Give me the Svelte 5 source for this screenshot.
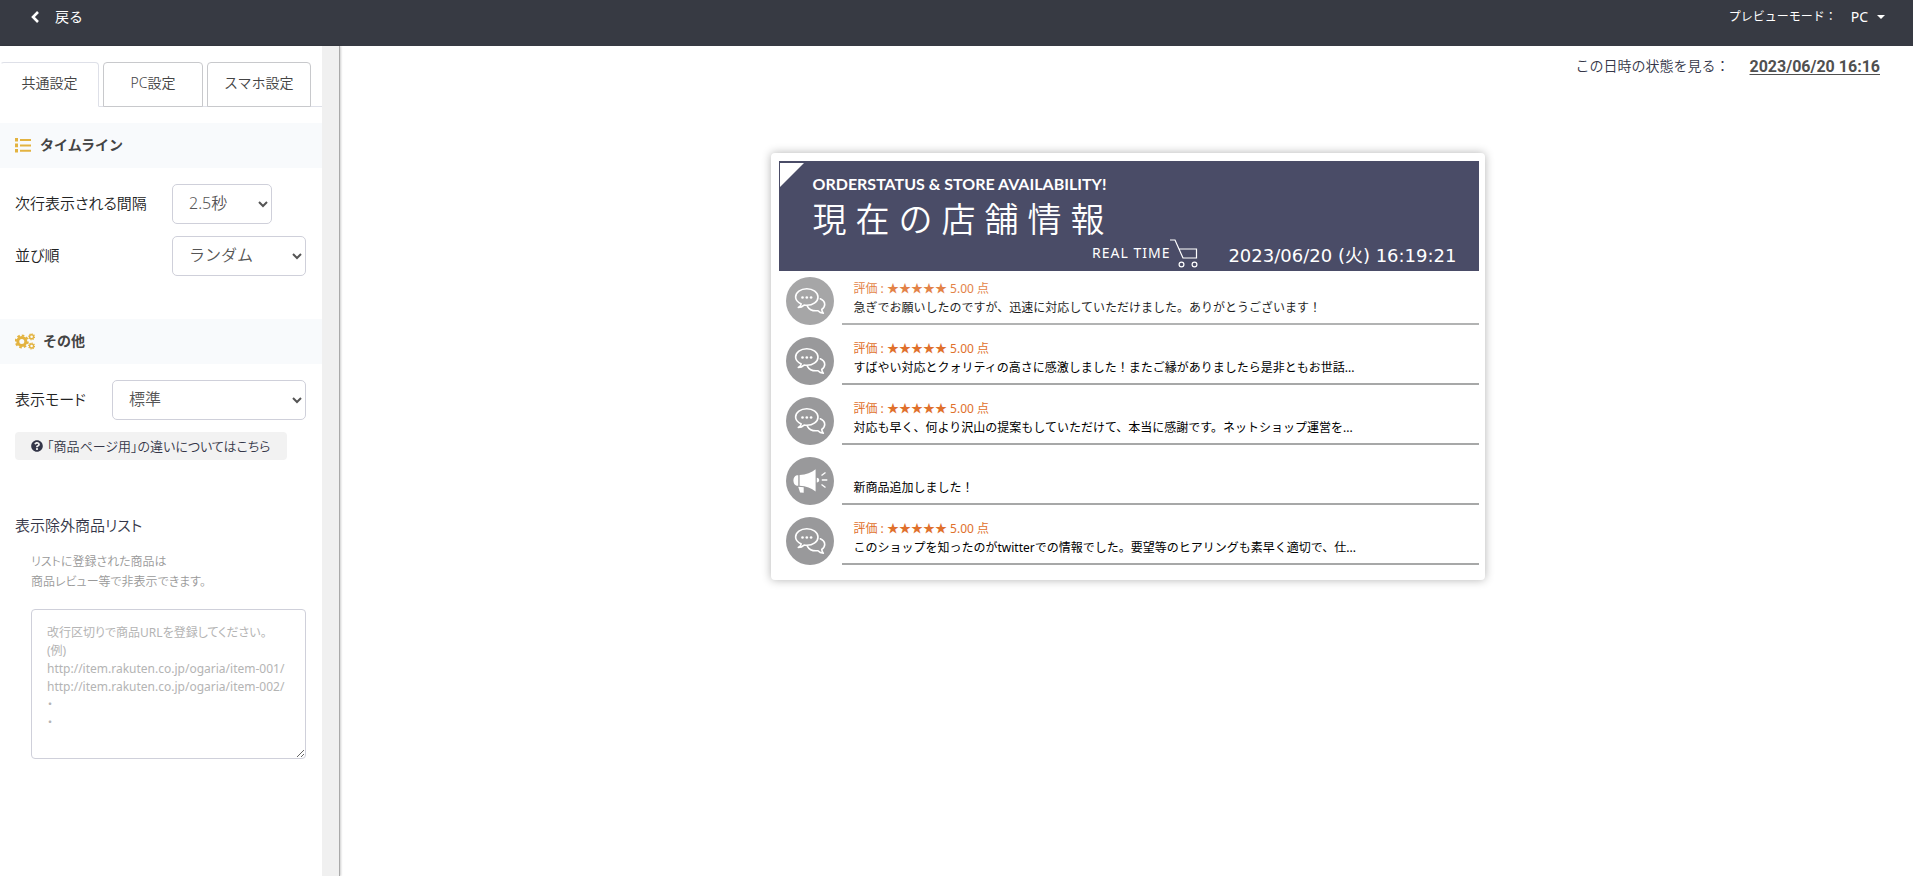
<script>
  let interval = $state('2.5秒');
  let order = $state('ランダム');
  let mode = $state('標準');
  let excluded = $state('');

  const tabs = ['共通設定', 'PC設定', 'スマホ設定'];
  let active = $state(0);

  const placeholder =
    '改行区切りで商品URLを登録してください。\n(例)\nhttp://item.rakuten.co.jp/ogaria/item-001/\nhttp://item.rakuten.co.jp/ogaria/item-002/\n・\n・';

  const rows = [
    { kind: 'review', entering: true, text: '急ぎでお願いしたのですが、迅速に対応していただけました。ありがとうございます！' },
    { kind: 'review', text: 'すばやい対応とクォリティの高さに感激しました！またご縁がありましたら是非ともお世話...' },
    { kind: 'review', text: '対応も早く、何より沢山の提案もしていただけて、本当に感謝です。ネットショップ運営を...' },
    { kind: 'news', text: '新商品追加しました！' },
    { kind: 'review', text: 'このショップを知ったのがtwitterでの情報でした。要望等のヒアリングも素早く適切で、仕...' }
  ];
</script>

<div class="page">
  <header class="topbar">
    <a class="back" href="#back">
      <svg width="10" height="14" viewBox="0 0 10 14" aria-hidden="true">
        <path d="M8 2 3 7l5 5" fill="none" stroke="#fff" stroke-width="2.6" />
      </svg>
      <span>戻る</span>
    </a>
    <div class="preview-mode">
      <span>プレビューモード：</span>
      <button type="button" class="device">PC <i class="caret"></i></button>
    </div>
  </header>

  <div class="body">
    <aside class="sidebar">
      <div class="tabs" role="tablist">
        {#each tabs as tab, i}
          <button type="button" role="tab" class="tab" class:active={active === i} aria-selected={active === i} onclick={() => (active = i)}>{tab}</button>
        {/each}
      </div>

      <h2 class="section">
        <svg width="17" height="15" viewBox="0 0 17 15" fill="#e3b340" aria-hidden="true">
          <path d="M0 0h3v3.6H0zM0 5.6h3v3.6H0zM0 11h3v3.6H0zM5 1h11v2H5zM5 6.4h11v2H5zM5 11.8h11v2H5z" />
        </svg>
        <span>タイムライン</span>
      </h2>
      <div class="fields">
        <div class="field">
          <label for="interval">次行表示される間隔</label>
          <select id="interval" class="w-short" bind:value={interval}>
            <option>2.5秒</option>
            <option>5秒</option>
          </select>
        </div>
        <div class="field">
          <label for="order">並び順</label>
          <select id="order" class="w-fill" bind:value={order}>
            <option>ランダム</option>
            <option>新着順</option>
          </select>
        </div>
      </div>

      <h2 class="section">
        <svg width="20" height="17" viewBox="0 0 20 17" fill="none" stroke="#e3b340" aria-hidden="true">
          <circle cx="6.8" cy="8.4" r="4" stroke-width="3" />
          <circle cx="6.8" cy="8.4" r="6" stroke-width="2" pathLength="16" stroke-dasharray="1.1 .9" />
          <circle cx="16.6" cy="3.8" r="2" stroke-width="1.4" />
          <circle cx="16.6" cy="3.8" r="2.9" stroke-width="1.1" pathLength="16" stroke-dasharray="1.1 .9" />
          <circle cx="16.6" cy="13" r="2" stroke-width="1.4" />
          <circle cx="16.6" cy="13" r="2.9" stroke-width="1.1" pathLength="16" stroke-dasharray="1.1 .9" />
        </svg>
        <span>その他</span>
      </h2>
      <div class="fields last">
        <div class="field compact">
          <label for="mode">表示モード</label>
          <select id="mode" class="w-fill" bind:value={mode}>
            <option>標準</option>
            <option>商品ページ用</option>
          </select>
        </div>
        <button type="button" class="help">
          <svg width="12" height="12" viewBox="0 0 512 512" fill="#343648" aria-hidden="true">
            <path d="M504 256c0 136.997-111.043 248-248 248S8 392.997 8 256C8 119.083 119.043 8 256 8s248 111.083 248 248zM262.655 90c-54.497 0-89.255 22.957-116.549 63.758-3.536 5.286-2.353 12.415 2.715 16.258l34.699 26.31c5.205 3.947 12.621 3.008 16.665-2.122 17.864-22.658 30.113-35.797 57.303-35.797 20.429 0 45.698 13.148 45.698 32.958 0 14.976-12.363 22.667-32.534 33.976C247.128 238.528 216 254.941 216 296v4c0 6.627 5.373 12 12 12h56c6.627 0 12-5.373 12-12v-1.333c0-28.462 83.186-29.647 83.186-106.667 0-58.002-60.165-102-116.531-102zM256 338c-25.365 0-46 20.635-46 46 0 25.364 20.635 46 46 46s46-20.636 46-46c0-25.365-20.635-46-46-46z" />
          </svg>
          <span>「商品ページ用」の違いについてはこちら</span>
        </button>
      </div>

      <div class="exclude">
        <label for="excluded">表示除外商品リスト</label>
        <p>リストに登録された商品は<br />商品レビュー等で非表示できます。</p>
        <textarea id="excluded" {placeholder} bind:value={excluded}></textarea>
      </div>
    </aside>

    <main class="main">
      <div class="moment">
        <span>この日時の状態を見る：</span>
        <a href="#datetime">2023/06/20 16:16</a>
      </div>

      <section class="card">
        <div class="banner">
          <svg class="corner" width="24" height="24" viewBox="0 0 24 24" aria-hidden="true">
            <path d="M0 0h24L0 24z" fill="#fff" />
          </svg>
          <p class="tagline">ORDERSTATUS &amp; STORE AVAILABILITY!</p>
          <h1>現在の店舗情報</h1>
          <div class="clock">
            <span class="realtime">REAL TIME</span>
            <svg width="28" height="29" viewBox="0 0 28 29" fill="none" stroke="#fff" stroke-width="1.2" aria-hidden="true">
              <path d="M0 1h5l8 18h13.500V10H9" />
              <circle cx="11.500" cy="25.500" r="2.400" />
              <circle cx="24.500" cy="25.500" r="2.400" />
            </svg>
            <time datetime="2023-06-20T16:19:21">2023/06/20 (火) 16:19:21</time>
          </div>
        </div>

        <ul class="feed">
          {#each rows as row}
            <li class:entering={row.entering}>
              <svg class="badge" width="48" height="48" viewBox="0 0 48 48" aria-hidden="true">
                <circle cx="24" cy="24" r="24" fill="#99999b" />
                {#if row.kind === 'review'}
                  <g fill="none" stroke="#fff" stroke-width="1.600" stroke-linejoin="round" stroke-linecap="round">
                    <path d="M12.300 30.500c1.800-.9 2.700-2 2.900-3.500C11.600 25.200 9.600 22.800 9.600 20c0-4.800 5-8.300 11.200-8.300S32 15.200 32 20s-5 8.300-11.200 8.300c-1 0-1.900-.1-2.700-.2-1.600 1.500-3.600 2.300-5.800 2.400z" />
                    <path d="M34.300 21.800c2.700 1.200 4.400 3.300 4.400 5.600 0 1.900-1.200 3.700-3 4.900.1 1.500.6 2.700 1.600 4-2.200-.2-4-1.100-5.300-2.600-4.700.5-9-1.300-10.600-4.400" />
                  </g>
                  <g fill="#fff">
                    <circle cx="16.500" cy="20.500" r="1.300" />
                    <circle cx="20.800" cy="20.500" r="1.300" />
                    <circle cx="25.100" cy="20.500" r="1.300" />
                  </g>
                {:else}
                  <g fill="#fff">
                    <path d="M12.300 18.200v10.600h-1.600C8.600 28.300 7.400 26 7.400 23.500s1.200-4.800 3.300-5.300zM13.600 18.100c6.500-.4 12-2.600 16-5.900v22.400c-4-3.300-9.500-5.400-16-5.800zM12.200 29.800l5.500.5v5.500l-3.600-.3zM30.800 20.800c1.600.2 2.400 1.200 2.400 2.400s-.8 2.200-2.400 2.400z" />
                  </g>
                  <path d="M35.500 18.500l4-3M35.800 23h5.500M35.500 27.500l4 3" stroke="#fff" stroke-width="1.400" fill="none" />
                {/if}
              </svg>
              <div class="entry">
                {#if row.kind === 'review'}
                  <p class="rating">評価 : <span class="stars">★★★★★</span> 5.00 点</p>
                {/if}
                <p>{row.text}</p>
              </div>
            </li>
          {/each}
        </ul>
      </section>
    </main>
  </div>
</div>

<style>
  :global(body) {
    margin: 0;
    background: #fff;
  }
  .page {
    min-height: 100vh;
    display: flex;
    flex-direction: column;
    font-family: 'Noto Sans', 'Noto Sans CJK JP', sans-serif;
    font-weight: 350;
    font-size: 15px;
    line-height: 20px;
    color: #343648;
    font-feature-settings: 'palt';
  }
  .page *,
  .page {
    box-sizing: border-box;
  }
  p, h1, h2, ul {
    margin: 0;
    padding: 0;
  }
  button, select, textarea {
    font: inherit;
    font-feature-settings: inherit;
    color: inherit;
    margin: 0;
  }

  .topbar {
    height: 46px;
    flex: none;
    display: flex;
    justify-content: space-between;
    align-items: flex-start;
    padding: 7px 28px 0 30px;
    background: #373a43;
    color: #fff;
    font-size: 14px;
    font-weight: 400;
    font-feature-settings: normal;
  }
  .back {
    display: flex;
    align-items: center;
    gap: 15px;
    color: inherit;
    text-decoration: none;
  }
  .preview-mode {
    display: flex;
    gap: 14px;
    font-size: 12px;
  }
  .device {
    display: flex;
    align-items: center;
    gap: 9px;
    padding: 0;
    border: 0;
    background: none;
    font-size: 14px;
  }
  .caret {
    border: 4px solid transparent;
    border-top-color: #fff;
    border-bottom: 0;
  }

  .body {
    flex: 1;
    display: flex;
  }
  .sidebar {
    flex: none;
    width: 340px;
    padding-top: 16px;
    border-right: 1px solid #a9a9a9;
    background: linear-gradient(#f0f0f0, #f0f0f0) right / 17px 100% no-repeat;
    padding-right: 17px;
    box-shadow: 1px 0 2px rgba(0, 0, 0, 0.2);
  }
  .tabs {
    display: flex;
    gap: 4px;
    height: 45px;
    border-bottom: 1px solid #dee0e8;
  }
  .tab {
    height: 45px;
    padding: 0 16px 4px;
    min-width: 100px;
    border: 1px solid #c8c9cc;
    border-radius: 4px 4px 0 0;
    background: #fff;
    color: #444;
    font-size: 14px;
    font-feature-settings: normal;
  }
  .tab.active {
    min-width: 99px;
    border-color: #dee0e8;
    border-left-color: #fff;
    border-bottom-color: #fff;
  }
  .section {
    display: flex;
    align-items: center;
    gap: 8px;
    height: 45px;
    padding: 0 15px;
    background: #f8fafc;
    color: #444;
    font-size: 14px;
    font-weight: 600;
    font-feature-settings: normal;
  }
  .section span {
    padding-bottom: 2px;
  }
  .tabs + .section {
    margin-top: 16px;
  }
  .fields {
    display: flex;
    flex-direction: column;
    gap: 12px;
    padding: 16px 16px 43px 15px;
  }
  .fields.last {
    padding-bottom: 55px;
  }
  .field {
    display: flex;
    align-items: center;
  }
  .field label {
    width: 157px;
    padding-bottom: 3px;
    color: #222;
  }
  .field.compact label {
    width: 97px;
  }
  select {
    height: 40px;
    padding: 0 12px 2px;
    border: 1px solid #cfd0da;
    border-radius: 5px;
    background: #fff;
    color: #555;
    font-size: 16px;
    font-feature-settings: normal;
  }
  .w-short {
    width: 100px;
  }
  .w-fill {
    flex: 1;
    min-width: 0;
  }
  .help {
    align-self: flex-start;
    display: flex;
    align-items: center;
    gap: 4px;
    height: 28px;
    padding: 0 16px;
    border: 0;
    border-radius: 4px;
    background: #f2f2f2;
    font-size: 13px;
  }
  .exclude {
    display: flex;
    flex-direction: column;
    padding: 0 16px 0 15px;
  }
  .exclude p {
    margin: 17px 0 17px 16px;
    color: #999;
    font-size: 12px;
  }
  textarea {
    height: 150px;
    margin-left: 16px;
    padding: 14px 15px;
    border: 1px solid #cfd0da;
    border-radius: 4px;
    background: #fff;
    font-size: 12px;
    font-weight: 400;
    line-height: 18px;
    resize: vertical;
  }
  textarea::placeholder {
    color: #b4b4b4;
    opacity: 1;
  }

  .main {
    flex: 1;
    min-width: 0;
    padding: 10px 33px 40px 35px;
  }
  .moment {
    display: flex;
    justify-content: flex-end;
    gap: 20px;
    font-size: 14px;
    font-feature-settings: normal;
  }
  .moment a {
    color: #505050;
    font: 700 16px/22px Roboto, sans-serif;
    text-underline-offset: 2px;
  }
  .card {
    width: 714px;
    max-width: 100%;
    margin: 75px auto 0;
    padding: 8px 6px 15px 8px;
    border-radius: 4px;
    background: #fff;
    box-shadow: 0 0 10px rgba(0, 0, 0, 0.3);
  }
  .banner {
    position: relative;
    height: 110px;
    padding: 12px 22px 0 34px;
    background: #4a4c67;
    color: #fff;
  }
  .corner {
    position: absolute;
    left: 1px;
    top: 2px;
  }
  .tagline {
    font: 700 16px/22px Lato, sans-serif;
  }
  h1 {
    font-size: 34px;
    font-weight: 350;
    line-height: 48px;
    letter-spacing: 9px;
    font-feature-settings: normal;
  }
  .clock {
    display: flex;
    justify-content: flex-end;
    align-items: flex-start;
    font-family: 'DejaVu Sans', 'Noto Sans CJK JP', sans-serif;
    font-weight: 400;
    margin-top: -4px;
  }
  .realtime {
    font-size: 14px;
    line-height: 28px;
    font-family: 'Noto Sans', sans-serif;
    letter-spacing: 1px;
  }
  time {
    margin-left: 30px;
    font-size: 18px;
    line-height: 34px;
  }
  .feed {
    display: flex;
    flex-direction: column;
    gap: 12px;
    padding: 6px 0 0 7px;
    list-style: none;
    font-size: 12px;
    font-weight: 400;
    font-feature-settings: normal;
    color: #000;
  }
  .feed li {
    display: flex;
    gap: 8px;
  }
  .feed .entering {
    opacity: 0.87;
  }
  .badge {
    flex: none;
  }
  .entry {
    flex: 1;
    display: flex;
    flex-direction: column;
    justify-content: flex-end;
    padding: 0 12px 6px;
    border-bottom: 2px solid #a7a8a8;
    line-height: 19px;
  }
  .rating {
    color: #e0702c;
  }
</style>
